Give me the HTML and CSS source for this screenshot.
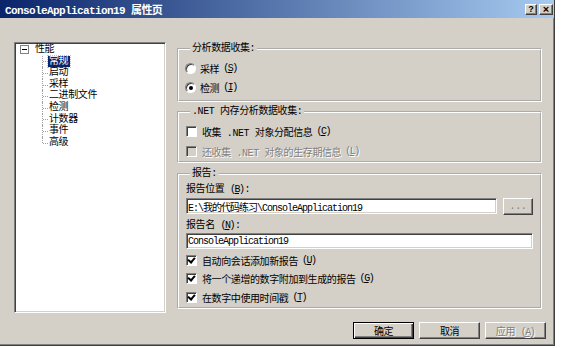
FILE: index.html
```html
<!DOCTYPE html>
<html lang="zh-CN">
<head>
  <meta charset="UTF-8" />
  <title>ConsoleApplication19 属性页</title>
  <link rel="stylesheet" href="styles.css">
</head>
<body>
  <div class="window">
    <div class="titlebar">
      <span class="title">ConsoleApplication19 属性页</span>
      <div class="title-buttons">
        <span class="tbtn">?</span>
        <span class="tbtn close">×</span>
      </div>
    </div>

    <div class="content">
      <div class="tree">
        <div class="root"><span class="expander"></span>性能</div>
        <ul class="children">
          <li><span class="selected">常规</span></li>
          <li>启动</li>
          <li>采样</li>
          <li>二进制文件</li>
          <li>检测</li>
          <li>计数器</li>
          <li>事件</li>
          <li>高级</li>
        </ul>
      </div>

      <div class="pages">
        <fieldset class="group collect">
          <legend>分析数据收集:</legend>
          <div class="option"><span class="radio"></span>采样 <span class="key">(<u>S</u>)</span></div>
          <div class="option"><span class="radio checked"></span>检测 <span class="key">(<u>I</u>)</span></div>
        </fieldset>

        <fieldset class="group memory">
          <legend>.NET 内存分析数据收集:</legend>
          <div class="option"><span class="check"></span>收集 .NET 对象分配信息 <span class="key">(<u>C</u>)</span></div>
          <div class="option disabled"><span class="check"></span>还收集 .NET 对象的生存期信息 <span class="key">(<u>L</u>)</span></div>
        </fieldset>

        <fieldset class="group report">
          <legend>报告:</legend>
          <div class="label">报告位置 <span class="key">(<u>B</u>)</span>:</div>
          <div class="field-row">
            <input class="field path" type="text" value="E:\我的代码练习\ConsoleApplication19">
            <button class="btn browse">...</button>
          </div>
          <div class="label second">报告名 <span class="key">(<u>N</u>)</span>:</div>
          <input class="field name" type="text" value="ConsoleApplication19">
          <div class="checks">
            <div class="option"><span class="check checked"></span>自动向会话添加新报告 <span class="key">(<u>U</u>)</span></div>
            <div class="option"><span class="check checked"></span>将一个递增的数字附加到生成的报告 <span class="key">(<u>G</u>)</span></div>
            <div class="option"><span class="check checked"></span>在数字中使用时间戳 <span class="key">(<u>T</u>)</span></div>
          </div>
        </fieldset>
      </div>
    </div>

    <div class="footer">
      <button class="btn default">确定</button>
      <button class="btn">取消</button>
      <button class="btn" disabled>应用 <span class="key">(<u>A</u>)</span></button>
    </div>
  </div>
</body>
</html>
```

FILE: styles.css
```css
body {
  margin: 0;
  background: #fff;
  font-family: "Liberation Mono", "Noto Sans CJK SC", monospace;
  font-size: 10px;
  letter-spacing: -0.4px;
  color: #000;
}
u {
  text-decoration: underline;
}
.key {
  letter-spacing: -1.5px;
  margin-right: 1px;
}
.window {
  width: 555px;
  height: 346px;
  box-sizing: border-box;
  background: #d4d0c8;
  border-right: 1px solid #404040;
  border-bottom: 1px solid #404040;
  box-shadow: inset -1px -1px 0 #808080;
}
.titlebar {
  height: 18px;
  display: flex;
  align-items: center;
  justify-content: space-between;
  background: linear-gradient(to right, #0a246a, #a6caf0);
  color: #fff;
}
.title {
  padding-left: 5px;
  font-weight: bold;
  font-size: 11px;
  letter-spacing: -0.6px;
}
.title-buttons {
  display: flex;
  gap: 2px;
  margin-right: 1px;
}
.tbtn {
  width: 12px;
  height: 11px;
  box-sizing: border-box;
  background: #d4d0c8;
  border: 1px solid;
  border-color: #fff #404040 #404040 #fff;
  box-shadow: inset -1px -1px 0 #808080;
  color: #000;
  font-family: "Liberation Sans", sans-serif;
  font-weight: bold;
  font-size: 9px;
  line-height: 9px;
  text-align: center;
  letter-spacing: 0;
}
.tbtn.close {
  width: 14px;
  font-size: 11px;
}

.content {
  display: flex;
  padding: 24px 0 0 14px;
}
.tree {
  width: 152px;
  height: 271px;
  box-sizing: border-box;
  background: #fff;
  border: 1px solid;
  border-color: #808080 #fff #fff #808080;
  box-shadow: inset 1px 1px 0 #404040, inset -1px -1px 0 #d4d0c8;
  padding-top: 1px;
  line-height: 11.6px;
}
.root {
  display: flex;
  align-items: center;
}
.expander {
  position: relative;
  width: 9px;
  height: 9px;
  box-sizing: border-box;
  border: 1px solid #808080;
  margin: 0 6px 0 5px;
}
.expander::after {
  content: "";
  position: absolute;
  left: 1px;
  top: 3px;
  width: 5px;
  height: 1px;
  background: #000;
}
.children {
  list-style: none;
  margin: 0 0 0 27px;
  padding: 0;
}
.children li {
  position: relative;
  padding-left: 6px;
  border-left: 1px dotted #a0a0a0;
}
.children li::before {
  content: "";
  position: absolute;
  left: 0;
  top: 50%;
  width: 5px;
  border-top: 1px dotted #a0a0a0;
}
.children li:last-child {
  border-left-color: transparent;
}
.children li:last-child::after {
  content: "";
  position: absolute;
  left: -1px;
  top: 0;
  height: 50%;
  border-left: 1px dotted #a0a0a0;
}
.selected {
  background: #0a246a;
  color: #fff;
  padding: 0 2px 0 1px;
  margin-left: -1px;
  outline: 1px dotted #c0c0c0;
}

.pages {
  width: 365px;
  margin-left: 11px;
  padding-top: 1px;
}
.group {
  margin: 0;
  padding: 4px 7px 3px;
  border: 2px groove #fff;
  min-width: 0;
}
.group legend {
  padding: 0 2px;
  margin-left: 4px;
  line-height: 12px;
}
.memory {
  margin-top: 4px;
  padding-top: 3px;
  padding-bottom: 0;
}
.report {
  margin-top: 5px;
  padding-bottom: 0;
}
.option {
  display: flex;
  align-items: center;
  height: 19px;
  gap: 4px;
}
.memory .option {
  height: 20px;
}
.checks {
  margin-top: 2px;
}
.checks .option {
  height: 18.5px;
}
.radio {
  position: relative;
  width: 11px;
  height: 11px;
  box-sizing: border-box;
  border-radius: 50%;
  border: 1px solid;
  border-color: #808080 #fff #fff #808080;
  background: #fff;
  box-shadow: inset 1px 1px 0 #404040;
  margin-left: -1px;
}
.radio.checked::after {
  content: "";
  position: absolute;
  left: 3px;
  top: 3px;
  width: 4px;
  height: 4px;
  border-radius: 50%;
  background: #000;
}
.check {
  position: relative;
  width: 11px;
  height: 11px;
  box-sizing: border-box;
  border: 1px solid;
  border-color: #808080 #fff #fff #808080;
  background: #fff;
  box-shadow: inset 1px 1px 0 #404040;
  margin-right: 1px;
}
.check.checked::after {
  content: "";
  position: absolute;
  left: 2px;
  top: 0px;
  width: 3px;
  height: 5px;
  border: solid #000;
  border-width: 0 2px 2px 0;
  transform: rotate(40deg);
}
.disabled {
  color: #808080;
  text-shadow: 1px 1px 0 #fff;
}
.disabled .check {
  background: #d4d0c8;
}
.label {
  line-height: 12px;
}
.label.second {
  margin-top: 5px;
}
.field-row {
  display: flex;
  align-items: flex-start;
  gap: 6px;
  margin-top: 2px;
}
.field {
  height: 16px;
  box-sizing: border-box;
  margin: 0;
  padding: 0 1px;
  border: 1px solid;
  border-color: #808080 #fff #fff #808080;
  box-shadow: inset 1px 1px 0 #404040, inset -1px -1px 0 #d4d0c8;
  background: #fff;
  font-family: "Liberation Mono", "Noto Sans CJK SC", monospace;
  font-size: 10px;
  letter-spacing: -1px;
  color: #000;
  outline: none;
}
.field.path {
  width: 311px;
}
.field.name {
  display: block;
  width: 347px;
  margin-top: 1px;
}

.btn {
  width: 61px;
  height: 17px;
  box-sizing: border-box;
  padding: 0;
  background: #d4d0c8;
  border: 1px solid;
  border-color: #fff #404040 #404040 #fff;
  box-shadow: inset -1px -1px 0 #808080;
  font-family: "Liberation Mono", "Noto Sans CJK SC", monospace;
  font-size: 10px;
  letter-spacing: -0.4px;
  color: #000;
}
.btn.browse {
  width: 30px;
  color: #808080;
}
.btn.default {
  border-color: #000;
  box-shadow: inset 1px 1px 0 #fff, inset -1px -1px 0 #404040, inset -2px -2px 0 #808080;
}
.btn:disabled {
  color: #808080;
  text-shadow: 1px 1px 0 #fff;
}
.footer {
  display: flex;
  justify-content: flex-end;
  gap: 5px;
  margin-top: 9px;
  padding-right: 8px;
}
```
